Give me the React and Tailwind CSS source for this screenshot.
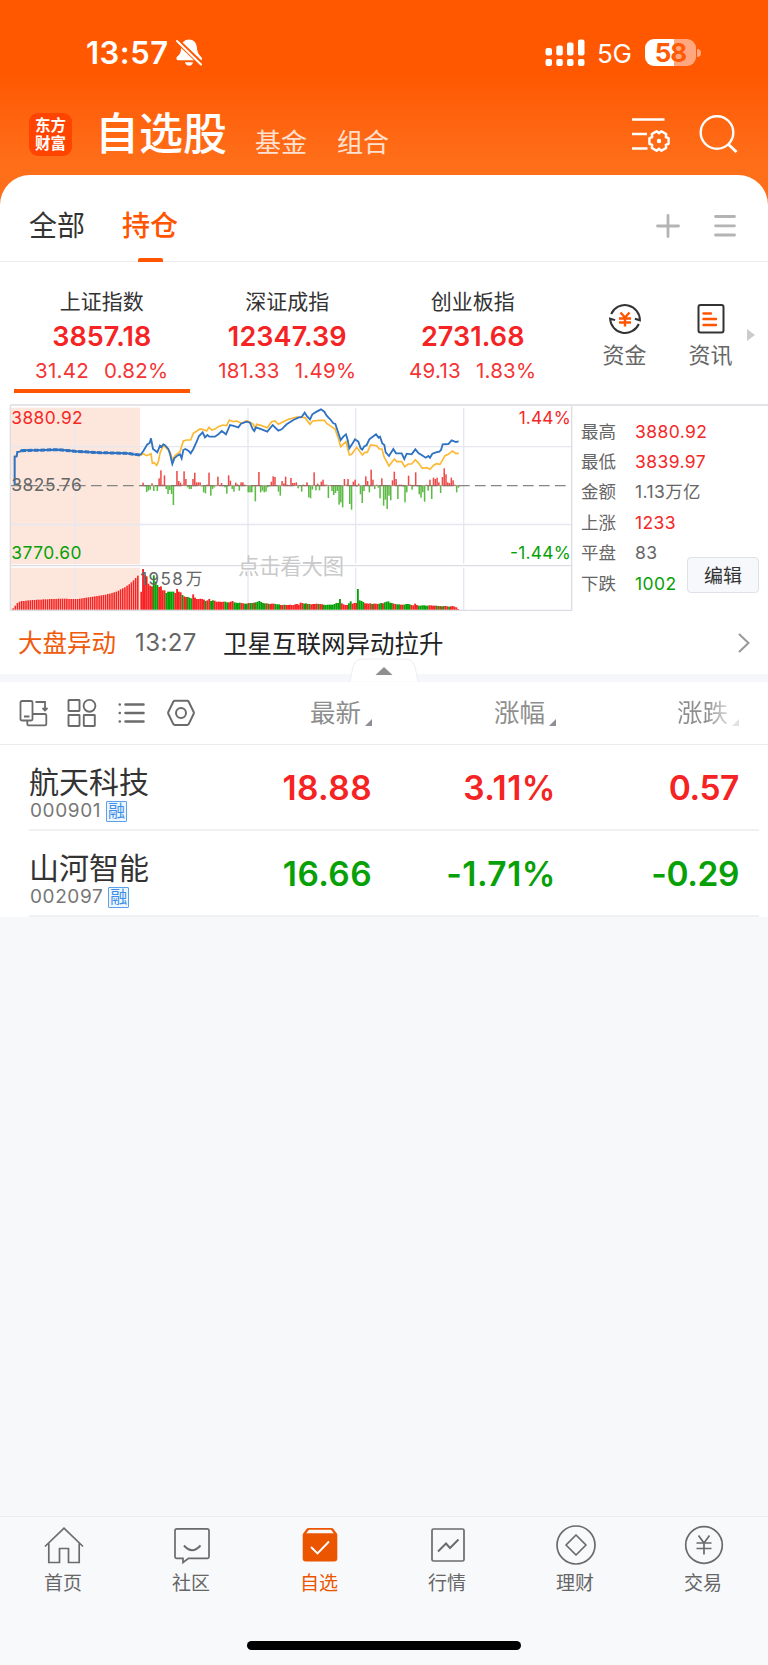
import clsx from 'clsx';

const INDICES = [
  { name: '上证指数', value: '3857.18', change: '31.42', pct: '0.82%', active: true },
  { name: '深证成指', value: '12347.39', change: '181.33', pct: '1.49%' },
  { name: '创业板指', value: '2731.68', change: '49.13', pct: '1.83%' },
];

const STATS = [
  { label: '最高', value: '3880.92', color: 'text-[#f52828]' },
  { label: '最低', value: '3839.97', color: 'text-[#f52828]' },
  { label: '金额', value: '1.13万亿', color: 'text-[#666]' },
  { label: '上涨', value: '1233', color: 'text-[#f52828]' },
  { label: '平盘', value: '83', color: 'text-[#666]' },
  { label: '下跌', value: '1002', color: 'text-[#07a007]' },
];

const STOCKS = [
  { name: '航天科技', code: '000901', price: '18.88', pct: '3.11%', diff: '0.57', up: true },
  { name: '山河智能', code: '002097', price: '16.66', pct: '-1.71%', diff: '-0.29', up: false },
];

// Chart units: 3 per pixel
const PRICE_LINE =
  '421,180 430,168 442,148 449,144 453,130 459,162 467,168 472,172 480,152 485,155 490,148 494,150 505,162 511,180 517,207 523,190 532,182 540,178 545,190 550,165 556,162 566,168 572,175 580,162 590,140 597,123 608,112 615,127 622,120 628,125 645,125 655,118 665,108 678,118 690,90 698,92 715,97 723,86 740,80 750,83 758,102 763,108 768,97 785,103 802,110 818,90 835,107 845,103 860,88 880,75 895,68 905,66 914,53 922,65 930,73 937,58 950,50 963,43 973,50 980,62 990,72 1000,85 1006,87 1012,105 1022,135 1030,125 1038,118 1043,135 1048,160 1058,145 1065,133 1075,140 1082,160 1087,164 1092,155 1100,150 1108,133 1118,125 1128,118 1136,128 1140,125 1147,145 1153,150 1157,172 1167,183 1180,162 1188,175 1205,175 1213,192 1220,176 1235,178 1246,163 1256,175 1265,180 1277,188 1285,183 1290,188 1297,176 1308,172 1318,170 1323,165 1328,148 1345,147 1355,136 1368,141 1376,139';

const AUCTION_LINE =
  '44,270 44,185 50,184 52,171 60,170 64,166 100,166 175,164 200,166 225,169 260,171 300,173 380,175 400,178 421,180';

const AVERAGE_LINE =
  '421,182 430,176 440,182 453,176 457,205 462,203 470,211 475,200 480,175 490,150 500,160 510,170 517,195 525,182 540,170 550,138 560,135 572,135 580,115 600,102 610,104 620,108 627,97 635,105 645,102 655,95 668,90 680,92 688,75 700,80 710,78 725,85 740,77 750,82 760,88 765,100 770,88 785,92 802,98 815,80 825,78 835,88 850,80 865,73 890,66 915,68 930,88 938,78 960,76 973,76 980,85 990,92 1005,102 1015,130 1022,155 1038,140 1048,180 1055,178 1070,157 1087,180 1095,172 1102,172 1112,150 1130,152 1138,162 1146,162 1152,185 1167,213 1183,192 1190,200 1205,200 1214,215 1225,207 1235,207 1246,194 1256,205 1267,220 1280,218 1290,223 1302,210 1310,206 1320,208 1335,182 1345,178 1357,168 1367,175 1376,175';

// Strength per minute, positive above the previous close
const STRENGTH = [
  9, -2, -19, -15, -12, 7, -16, -2, -16, 22, 46, 3, 31, -10, -25, -13, -25, -58, 2, 44, 14, 9, 3, 43, 20, -5, -10,
  -10, 20, 39, 10, 10, 10, -3, -20, -23, 3, 39, -30, -10, -5, 2, 27, 2, 8, 2, -5, -24, 31, 15, -10, -18, 9, 4, -15,
  10, 10, 3, 2, -20, -20, -20, 2, -47, 2, 41, -20, -15, -20, -18, -5, -2, 12, 28, 26, 2, -18, -30, 14, 7, 27, 3, 2,
  23, 8, 8, 10, -8, 2, -18, 3, 2, 10, -35, -38, -12, 40, -14, 6, -14, 12, 18, 3, 3, -37, 2, -16, -28, -22, -16, -57,
  -50, -65, 20, 3, 20, -55, -72, 12, 18, -3, 6, -26, -52, -16, 28, 14, -20, 48, 18, -10, 3, -6, -38, 22, -60, -42,
  -70, -30, -44, 16, 42, 20, -40, 3, 3, -3, -50, -20, 30, 3, -12, 2, 40, -2, -26, -36, -20, -48, 3, -15, 18, -40, 24,
  20, 24, 10, -22, 26, 52, 34, 10, 8, 24, 16, 3, -20, -6,
];

const AUCTION_VOLUME = [
  4, 12, 20, 24, 26, 26, 27, 28, 28, 29, 29, 30, 30, 30, 31, 31, 31, 32, 32, 32, 32, 33, 33, 33, 33, 33, 32, 32, 32,
  32, 32, 33, 34, 35, 36, 37, 38, 39, 40, 41, 42, 43, 44, 45, 47, 48, 50, 52, 54, 57, 61, 64, 67, 72, 76, 82, 88, 95,
  102,
];

// Negative entries are drawn green
const VOLUME = [
  54, 122, 104, 100, 78, 72, 70, -103, -84, -74, 68, 70, 58, 58, -50, -54, -54, -54, -54, 50, 62, 54, 52, -44, 40, 38,
  -38, -36, -34, 46, 36, 32, 32, 33, 32, 30, -26, 28, 32, -26, -28, 27, 24, 24, 24, 23, 24, -24, -22, 22, 24, 26, -22,
  -21, -20, -21, 20, 19, -18, -18, 20, -20, -20, 21, -22, -24, -26, -23, -20, -19, 19, -18, 17, 18, 18, -17, -16, -16,
  14, 14, -15, 14, 14, 15, 14, 14, 16, 17, 15, 21, 20, -18, -19, 17, -17, 16, 17, 17, 18, -17, 17, 16, -15, -14, -15,
  -15, -15, -15, -17, -20, -20, -32, 19, 16, 14, 14, -19, -25, 18, 20, 20, -62, -28, -26, -23, 19, 19, 18, 19, -17, 18,
  18, 17, -18, -20, 19, -22, -24, -25, -21, -20, 18, 17, -16, -16, 15, 15, -15, -17, -17, -16, 14, 13, 18, 14, -12,
  -12, -13, -13, -12, -12, 13, 13, 12, 12, -12, 11, -11, 10, -11, 11, 10, -9, 10, 11, 9, 7, 2,
];

function StatusBar() {
  return (
    <div className="flex h-[105px] items-center justify-between pl-[86px] pr-[67px] text-white">
      <div className="flex items-center gap-[7px]">
        <span className="text-[31px] leading-8 font-semibold tracking-[0.5px]">13:57</span>
        <svg width="26" height="28" viewBox="0 0 26 28" fill="currentColor">
          <path d="M13 .5c-4.300 0-7.300 3-7.600 7.300-.3 4.600-1.200 7.300-3.600 9.300-1.200 1-1.600 1.800-1.300 3 .3.900 1 1.200 2.100 1.200h21.800c1 0 1.600-.5 1.600-1.500 0-1-.5-1.700-1.500-2.600-2.300-2-3.400-4.500-3.700-9.100C20.500 3.600 17.300.5 13 .5z" />
          <path d="M9 23.200h8c-.4 2.200-2 3.500-4 3.500s-3.600-1.300-4-3.500z" />
          <path d="M2 2.500l24 23" stroke="#ff5800" strokeWidth="5" />
          <path d="M1 2l24 23.500" stroke="currentColor" strokeWidth="2" strokeLinecap="round" />
        </svg>
      </div>
      <div className="flex items-center">
        <svg width="40" height="28" viewBox="0 0 40 28" fill="currentColor">
          <rect x="0.5" y="9" width="6.5" height="7.5" rx="2" />
          <rect x="11.3" y="6.5" width="6.5" height="10" rx="2" />
          <rect x="22" y="3.5" width="6.5" height="13" rx="2" />
          <rect x="33" y="0.5" width="6.5" height="16" rx="2" />
          <rect x="0.5" y="20" width="6.5" height="7" rx="2" />
          <rect x="11.3" y="20" width="6.5" height="7" rx="2" />
          <rect x="22" y="20" width="6.5" height="7" rx="2" />
          <rect x="33" y="20" width="6.5" height="7" rx="2" />
        </svg>
        <span className="ml-[12px] w-[48px] pt-[2px] text-[26px] leading-8 tracking-[-0.3px]">5G</span>
        <div className="flex h-[27px] w-[51px] items-center justify-center rounded-[9px] bg-[linear-gradient(90deg,#fff_57%,#ffa880_57%)] text-[26px] leading-none font-bold tracking-[-1px] text-[#ff5a05]">
          58
        </div>
        <div className="ml-[1px] h-2 w-1 rounded-r-full bg-[#ffa880]" />
      </div>
    </div>
  );
}

function Header() {
  return (
    <div className="flex h-[70px] items-start pl-[29px] text-white">
      <div className="mt-2 flex h-[43px] w-[43px] flex-col items-center justify-center rounded-[9px] bg-[#ff4300] text-[15.5px] leading-[18px] font-bold">
        <span>东方</span>
        <span>财富</span>
      </div>
      <h1 className="mt-[7px] ml-[23px] text-[44px] leading-[44px] font-medium">自选股</h1>
      <span className="mt-[24px] ml-[28px] text-[26px] leading-7 text-white/80">基金</span>
      <span className="mt-[24px] ml-[30px] text-[26px] leading-7 text-white/80">组合</span>
      <svg className="mt-[11px] ml-auto" width="40" height="38" viewBox="0 0 40 38" fill="none" stroke="currentColor" strokeWidth="2.4">
        <path d="M1 3.500h32.500M1 18h15M1 32.500h15.500" />
        <path
          strokeLinejoin="round"
          d="M37.600 22.200v5.600l-2.800 1.100.4 3-4.800 2.800-2.400-1.900-2.400 1.900-4.800-2.800.4-3-2.800-1.100v-5.600l2.800-1.100-.4-3 4.800-2.800 2.400 1.900 2.400-1.900 4.800 2.800-.4 3z"
        />
        <circle cx="28" cy="25" r="2.2" fill="currentColor" stroke="none" />
      </svg>
      <svg className="mt-[10px] mr-[30px] ml-[28px]" width="39" height="39" viewBox="0 0 39 39" fill="none" stroke="currentColor" strokeWidth="2.4">
        <circle cx="18" cy="17.5" r="16.3" />
        <path d="M29 29l8.500 8" strokeWidth="3" />
      </svg>
    </div>
  );
}

function TabBar() {
  return (
    <div className="flex h-[87px] items-start border-b border-[#ededed] pl-[29px]">
      <span className="mt-[35px] text-[28px] leading-8 text-[#333]">全部</span>
      <div className="ml-[37px] flex h-[87px] flex-col items-center pt-[35px]">
        <span className="text-[28px] leading-8 font-medium text-[#ff5500]">持仓</span>
        <span className="mt-4 h-[4px] w-[25px] rounded-t-[2px] bg-[#ff5500]" />
      </div>
      <svg className="mt-[39px] ml-auto" width="24" height="24" viewBox="0 0 24 24" stroke="#b4b4b4" strokeWidth="2.8" strokeLinecap="round">
        <path d="M1.500 12h21M12 1.500v21" />
      </svg>
      <svg className="mt-[39px] mr-[31px] ml-[33px]" width="24" height="24" viewBox="0 0 24 24" stroke="#b4b4b4" strokeWidth="2.8" strokeLinecap="round">
        <path d="M2.500 2.500h19M2.500 11.800h19M2.500 21h19" />
      </svg>
    </div>
  );
}

function IndexCard({ item }) {
  return (
    <div className="flex w-[185.5px] flex-col items-center">
      <span className="text-[21px] leading-[22px] text-[#333]">{item.name}</span>
      <span className="mt-[6px] text-[27px] leading-9 font-semibold tracking-[0.1px] text-[#f52323]">{item.value}</span>
      <div className="mt-[6px] flex gap-[15px] text-[20.5px] leading-5 tracking-[0.25px] text-[#f53535]">
        <span>{item.change}</span>
        <span>{item.pct}</span>
      </div>
      {item.active && <span className="mt-2 h-1 w-[176px] bg-[#ff5500]" />}
    </div>
  );
}

function IndexSection() {
  return (
    <div className="flex h-[142px] items-start pt-[29px] pl-[9px]">
      {INDICES.map((item) => (
        <IndexCard key={item.name} item={item} />
      ))}
      <div className="mt-[11px] ml-[16px] flex w-[86px] flex-col items-center">
        <svg width="34" height="34" viewBox="0 0 34 34" fill="none" stroke="#333" strokeWidth="2">
          <path d="M3.200 12A15 15 0 0 1 31.900 18.300l-5-1.600" />
          <path d="M30.800 22A15 15 0 0 1 2.100 16.700l5 1.400" />
          <path d="M12.500 10.500l4.500 5 4.500-5M11 16.500h12M11 20.500h12M17 15.500v9" stroke="#ff5500" strokeWidth="2.4" />
        </svg>
        <span className="mt-[7px] text-[22px] leading-6 text-[#666]">资金</span>
      </div>
      <div className="mt-[11px] flex w-[86px] flex-col items-center">
        <svg width="34" height="34" viewBox="0 0 34 34" fill="none" stroke="#333" strokeWidth="2">
          <rect x="4.500" y="3" width="25" height="27.500" rx="2" />
          <path d="M9.500 11.500h7.500M9.500 17h12.500M9.500 23h12.500" stroke="#ff5500" strokeWidth="2.4" strokeLinecap="round" />
        </svg>
        <span className="mt-[7px] text-[22px] leading-6 text-[#666]">资讯</span>
      </div>
      <svg className="mt-[38px] -ml-[8px]" width="10" height="12" viewBox="0 0 10 12" fill="#ccc">
        <path d="M1 0l8 6-8 6z" />
      </svg>
    </div>
  );
}

function MarketChart() {
  return (
    <svg className="shrink-0" width="573" height="208" viewBox="0 27 1719 624" fill="none" fontFamily="Inter, 'Noto Sans CJK SC', sans-serif">
      <g fill="#fde7dc">
        <rect x="33" y="38" width="387" height="470" />
        <rect x="33" y="518" width="387" height="126" />
      </g>
      <g stroke="#e6e7f0" strokeWidth="4">
        <path d="M33 155H1715M33 388.500H1715" />
        <path d="M226 38V506M226 518V644M744 38V506M744 518V644M1067 38V506M1067 518V644M1391 38V506M1391 518V644" />
      </g>
      <g stroke="#dcdde4" strokeWidth="4">
        <path d="M31 30V647M33 512H1715M30 646H1717M1715 30V647" />
      </g>
      <path d="M33 272H1710" stroke="#858585" strokeWidth="4" strokeDasharray="32 16" />

      {STRENGTH.map((v, i) => (
        <rect
          key={i}
          x={427 + i * 5.345}
          y={v > 0 ? 272 - v : 272}
          width="4.6"
          height={Math.abs(v)}
          fill={v > 0 ? '#ee4a4a' : '#5cbb45'}
        />
      ))}
      <path d="M421 272H1380" stroke="#8a6a5c" strokeWidth="2" />

      {AUCTION_VOLUME.map((v, i) => (
        <rect key={i} x={37 + i * 6.45} y={644 - v} width="4.7" height={v} fill="#f52323" />
      ))}
      {VOLUME.map((v, i) => (
        <rect
          key={i}
          x={421 + i * 5.37}
          y={644 - Math.abs(v)}
          width="5.6"
          height={Math.abs(v)}
          fill={v > 0 ? '#f52323' : '#07a007'}
        />
      ))}

      <polyline points={AVERAGE_LINE} stroke="#fcb833" strokeWidth="5" />
      <polyline points={AUCTION_LINE} stroke="#2f72c2" strokeWidth="6" />
      <path d="M64 167L175 164L225 169L300 173L380 175L421 180" stroke="#2f72c2" strokeWidth="9" strokeDasharray="14 5" />
      <polyline points={PRICE_LINE} stroke="#2f72c2" strokeWidth="5.5" />

      <g fontSize="52">
        <text x="34" y="86" fill="#f52828" textLength="214">3880.92</text>
        <text x="34" y="289" fill="#666" textLength="211">3825.76</text>
        <text x="34" y="492" fill="#07a007" textLength="210">3770.60</text>
        <text x="1556" y="86" fill="#f52828" textLength="156">1.44%</text>
        <text x="1530" y="492" fill="#07a007" textLength="182">-1.44%</text>
        <text x="421" y="569" fill="#666" fontSize="51" textLength="127">1958</text>
        <text x="557" y="569" fill="#666" fontSize="50">万</text>
      </g>
      <text x="714" y="536" fontSize="64" fill="#c9c9c9" textLength="318">点击看大图</text>
    </svg>
  );
}

function MarketPanel() {
  return (
    <div className="relative flex h-[208px]">
      <div className="absolute top-0 right-0 left-[10px] h-[2px] bg-[#e3e3e8]" />
      <MarketChart />
      <div className="flex flex-col pt-[12.5px] pl-[8px]">
        {STATS.map((row) => (
          <div key={row.label} className="flex h-[30.4px] items-center text-[17.5px]">
            <span className="w-[54px] text-[#666]">{row.label}</span>
            <span className={clsx('tracking-[0.4px]', row.color)}>{row.value}</span>
          </div>
        ))}
      </div>
      <button className="absolute top-[153px] right-[9px] h-9 w-[72px] rounded-[4px] border border-[#dfe1e8] bg-[#f6f8fb] pt-[2px] text-[19px] leading-none text-[#333]">
        编辑
      </button>
    </div>
  );
}

function NewsRow() {
  return (
    <div className="relative h-[70px] border-b-8 border-[#f6f7fa]">
      <div className="flex h-[62px] items-center pl-[18px] leading-8">
        <span className="text-[24.5px] text-[#ef5a0b]">大盘异动</span>
        <span className="ml-[19px] w-[88px] text-[24px] tracking-[0.4px] text-[#666]">13:27</span>
        <span className="pt-[2px] text-[24.5px] text-[#222]">卫星互联网异动拉升</span>
        <svg className="mr-[18px] ml-auto" width="12" height="20" viewBox="0 0 12 20" fill="none" stroke="#999" strokeWidth="2">
          <path d="M1 1l9.500 9L1 19" />
        </svg>
      </div>
      <svg className="absolute top-[46px] left-[349px]" width="70" height="25" viewBox="0 0 70 25">
        <path d="M1 23.500L3.500 11Q5 1 14 1h42q9 0 10.500 10L69 23.500" fill="#fff" stroke="#eceef2" />
        <path d="M26.500 17L35 9l8.500 8z" fill="#8e8e8e" />
      </svg>
    </div>
  );
}

function ColumnLabel({ children, className, faded }) {
  return (
    <div className={clsx('flex items-end justify-end', className)}>
      <span
        className={clsx(
          'text-[25.5px] leading-7',
          faded ? 'bg-linear-to-r from-[#8e8e8e] from-55% to-[#d8d8d8] bg-clip-text text-transparent' : 'text-[#8e8e8e]'
        )}
      >
        {children}
      </span>
      <svg className="mb-[1px] ml-[4px]" width="7" height="7" viewBox="0 0 7 7" fill={faded ? '#e2e2e4' : '#8e8e96'}>
        <path d="M7 0v7H0z" />
      </svg>
    </div>
  );
}

function TableHeader() {
  return (
    <div className="flex h-[63px] items-center border-b border-[#ededed] pl-[18px] text-[#6b6b6b]">
      <div className="flex w-[178px] justify-between">
        <svg width="30" height="30" viewBox="0 0 30 30" fill="none" stroke="currentColor" strokeWidth="1.8">
          <rect x="2.500" y="3" width="12" height="19.500" rx="1.500" />
          <path d="M6 18.500h5.500M17.500 4h9.500v8.500M24.500 10l2.500 2.500 2.500-2.500" />
          <path d="M14.500 16h12.500q1.300 0 1.300 1.300V26q0 1.300-1.300 1.300H10.500Q9.300 27.300 9.300 26v-3" />
        </svg>
        <svg width="30" height="30" viewBox="0 0 30 30" fill="none" stroke="currentColor" strokeWidth="1.9">
          <rect x="1.500" y="2" width="11" height="11" rx=".5" />
          <circle cx="22.500" cy="7.800" r="5.900" />
          <rect x="1.500" y="17" width="11" height="11" rx=".5" />
          <rect x="16.800" y="17" width="11" height="11" rx=".5" />
        </svg>
        <svg width="30" height="30" viewBox="0 0 30 30" fill="none" stroke="currentColor" strokeWidth="2.5" strokeLinecap="round">
          <path d="M8.500 6.500h18M8.500 15h18M8.500 23.500h18M2.700 6.500h.1M2.700 15h.1M2.700 23.500h.1" />
        </svg>
        <svg width="30" height="30" viewBox="0 0 30 30" fill="none" stroke="currentColor" strokeWidth="2" strokeLinejoin="round">
          <path d="M8.800 2.800h12.400q1 0 1.500.9l5 10.300q.4.900 0 1.800l-5 10.300q-.5.900-1.500.9H8.800q-1 0-1.500-.9l-5-10.300q-.4-.9 0-1.800l5-10.300q.5-.9 1.500-.9z" />
          <circle cx="15" cy="15" r="5" />
        </svg>
      </div>
      <ColumnLabel className="w-[176px]">最新</ColumnLabel>
      <ColumnLabel className="w-[184px]">涨幅</ColumnLabel>
      <ColumnLabel className="w-[183px]" faded>
        涨跌
      </ColumnLabel>
    </div>
  );
}

function StockRow({ stock }) {
  return (
    <div className="mr-[9px] ml-[29px] flex h-[86px] border-b-2 border-[#f0f1f3]">
      <div className="w-[163px] pt-[21px]">
        <div className="text-[30px] leading-8 text-[#333]">{stock.name}</div>
        <div className="mt-[1px] flex items-center gap-[5px] pl-[1px]">
          <span className="text-[19px] leading-6 tracking-[0.6px] text-[#777]">{stock.code}</span>
          <span className="flex h-[21px] w-[21px] items-center justify-center rounded-[1px] border border-[#5aa0ea] bg-[#eef6ff] text-[17px] leading-none text-[#3d8ee6]">
            融
          </span>
        </div>
      </div>
      <div
        className={clsx(
          'flex h-[86px] items-center text-right text-[33.5px] leading-9 font-semibold',
          stock.up ? 'text-[#f52323]' : 'text-[#07a007]'
        )}
      >
        <span className="w-[180px] tracking-[0.4px]">{stock.price}</span>
        <span className="w-[184px] tracking-[0.5px]">{stock.pct}</span>
        <span className="w-[183px] tracking-[-0.4px]">{stock.diff}</span>
      </div>
    </div>
  );
}

const NAV_ITEMS = [
  {
    label: '首页',
    icon: <path d="M1 20.500L20 2.200l19 18.300M4.800 17.500V36.500h10.700V22.500h9v14h10.700V17.500" />,
  },
  {
    label: '社区',
    icon: (
      <>
        <path d="M5 2.800h30q2 0 2 2v26q0 1.500-1.500 1.500H16.500L11 36.500v-4.200H4.500Q3 32.300 3 30.800v-26q0-2 2-2z" />
        <path d="M12 19.500q8 9.500 16.500 0" strokeWidth="2" />
      </>
    ),
  },
  {
    label: '自选',
    active: true,
    icon: (
      <>
        <path d="M8.500 2h23q1 0 1.700.8L36.500 7q.8 1 .8 2.200V32.500q0 3-3 3H5.700q-3 0-3-3V9.200Q2.700 8 3.500 7l3.300-4.200Q7.500 2 8.500 2z" fill="#ec5500" stroke="none" />
        <path d="M9 3.800h22l2.800 3.500H6.200z" fill="#f8f9fb" stroke="none" />
        <path d="M11 21l6.500 6.500L29 15.500" stroke="#fff" strokeWidth="1.9" />
      </>
    ),
  },
  {
    label: '行情',
    icon: (
      <>
        <rect x="4" y="3" width="32" height="32" rx="1.500" />
        <path d="M10 25.500l8-8 4 4.500 8.500-8.500" strokeWidth="1.9" />
      </>
    ),
  },
  {
    label: '理财',
    icon: (
      <>
        <circle cx="20" cy="19" r="19" />
        <path d="M20 9l10 10-10 10-10-10z" strokeLinejoin="round" />
      </>
    ),
  },
  {
    label: '交易',
    icon: (
      <>
        <circle cx="20" cy="19" r="18.300" />
        <path d="M14.500 9.500l5.500 7.500 5.500-7.500M12.500 17h15M12.500 22.500h15M20 17v11.500" />
      </>
    ),
  },
];

function BottomNav() {
  return (
    <nav className="h-[149px] border-t border-[#ececee] bg-[#f8f9fb]">
      <div className="flex h-[124px] pt-[9px]">
        {NAV_ITEMS.map((item) => (
          <div key={item.label} className="flex w-32 flex-col items-center">
            <svg className="overflow-visible" width="40" height="40" viewBox="0 0 40 40" fill="none" stroke="#6b6b6b" strokeWidth="1.7">
              {item.icon}
            </svg>
            <span
              className={clsx('mt-[6px] mr-[2px] text-[19px] leading-6', item.active ? 'text-[#ec5500]' : 'text-[#666]')}
            >
              {item.label}
            </span>
          </div>
        ))}
      </div>
      <div className="mx-auto h-[9px] w-[274px] rounded-full bg-black" />
    </nav>
  );
}

export default function App() {
  return (
    <div className="flex h-[1665px] w-[768px] flex-col overflow-hidden bg-[#f6f8fa] font-[Inter,'Noto_Sans_CJK_SC',sans-serif]">
      <div className="bg-linear-to-b from-[#ff5800] from-35% to-[#ff6f1a] to-80% pb-[35px]">
        <StatusBar />
        <Header />
      </div>
      <main className="-mt-[35px] rounded-t-[30px] bg-white">
        <TabBar />
        <IndexSection />
        <MarketPanel />
        <NewsRow />
        <TableHeader />
        {STOCKS.map((stock) => (
          <StockRow key={stock.code} stock={stock} />
        ))}
      </main>
      <div className="flex-1" />
      <BottomNav />
    </div>
  );
}
